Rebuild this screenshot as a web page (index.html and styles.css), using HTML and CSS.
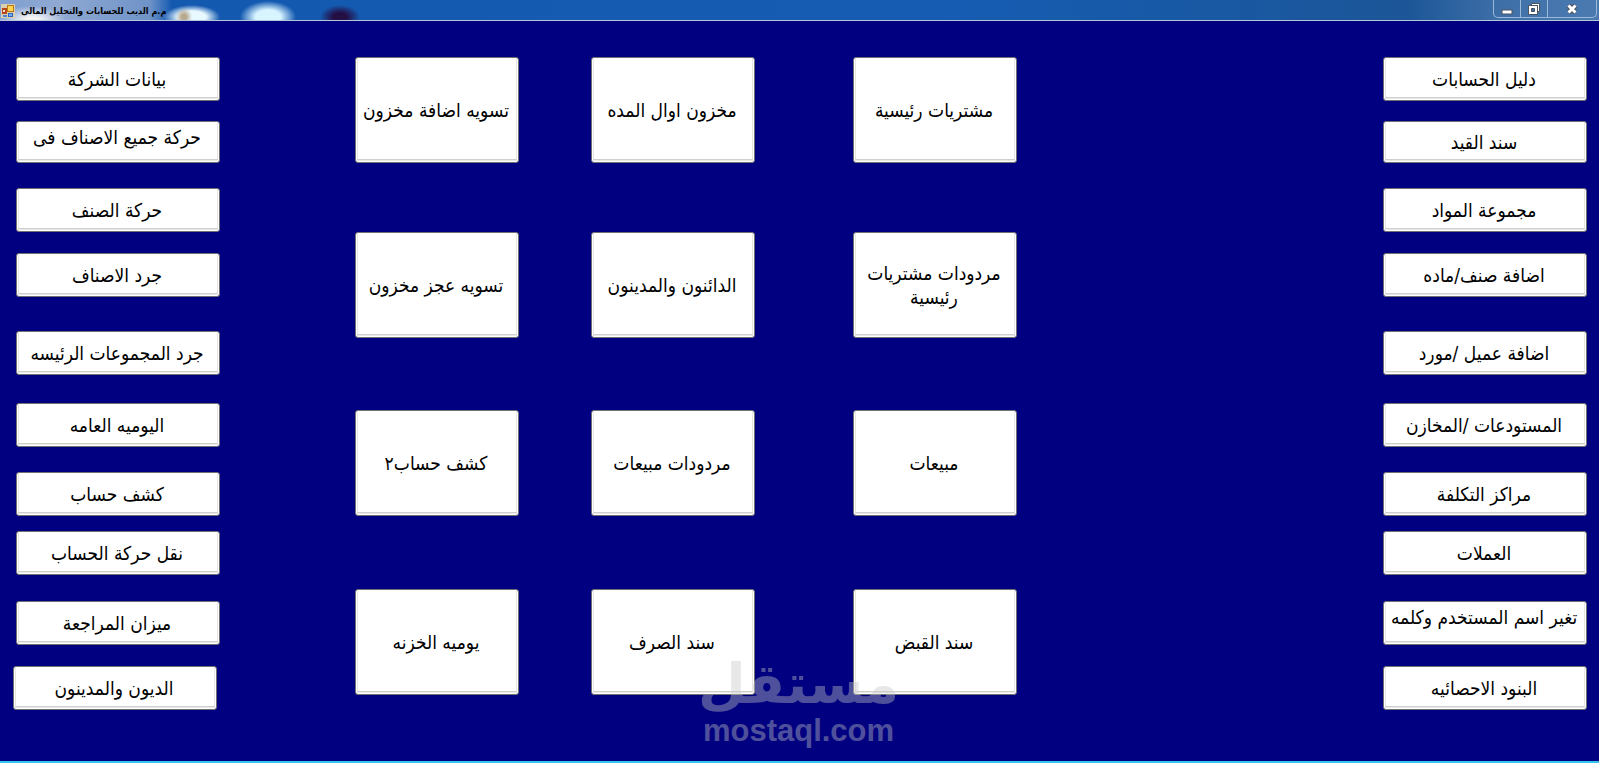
FILE: index.html
```html
<!DOCTYPE html>
<html lang="ar">
<head>
<meta charset="utf-8">
<meta name="viewport" content="width=device-width, initial-scale=1">
<title>م.م الديب للحسابات والتحليل المالى</title>
<link rel="stylesheet" href="styles.css">
</head>
<body>
<div class="window">
  <header class="titlebar">
    <svg class="app-icon" viewBox="0 0 14 14" aria-hidden="true">
      <rect x="0" y="0" width="14" height="14" fill="#d9cfae"/>
      <rect x="1" y="4" width="5" height="6" fill="#b5481c"/>
      <rect x="2" y="6" width="2" height="2" fill="#f3d9c0"/>
      <rect x="6" y="1" width="7" height="7" fill="#b87a10"/>
      <rect x="7" y="2" width="5" height="5" fill="#ffd257"/>
      <rect x="7" y="9" width="5" height="4" fill="#2f62c4"/>
      <rect x="8" y="10" width="3" height="2" fill="#6fb0f5"/>
      <rect x="2" y="11" width="4" height="2" fill="#4d84d6"/>
    </svg>
    <h1 class="title" dir="rtl">م.م الديب للحسابات والتحليل المالى</h1>
    <div class="controls">
      <button class="control minimize" type="button" aria-label="تصغير">
        <svg viewBox="0 0 12 12"><rect x="1" y="7" width="10" height="4" fill="#fff" stroke="#4b5260"/></svg>
      </button>
      <button class="control restore" type="button" aria-label="استعادة">
        <svg viewBox="0 0 12 12"><path d="M3.500.5h8v8h-2v-6h-6z" fill="#fff" stroke="#4b5260"/><path d="M.5 2.500h9v9h-9z" fill="#fff" stroke="#4b5260"/><path d="M3.500 5.500h3v3h-3z" fill="#3f6ba5" stroke="#4b5260"/></svg>
      </button>
      <button class="control close" type="button" aria-label="إغلاق">
        <svg viewBox="0 0 12 12"><path d="M2.500 2.500l7 7M9.500 2.500l-7 7" stroke="#4b5260" stroke-width="5"/><path d="M2.500 2.500l7 7M9.500 2.500l-7 7" stroke="#fff" stroke-width="3"/></svg>
      </button>
    </div>
  </header>

  <main class="desk">
    <nav class="side reports" aria-label="التقارير">
      <button type="button">بيانات الشركة</button>
      <button type="button" class="top">حركة جميع الاصناف فى</button>
      <button type="button">حركة الصنف</button>
      <button type="button">جرد الاصناف</button>
      <button type="button">جرد المجموعات الرئيسه</button>
      <button type="button">اليوميه العامه</button>
      <button type="button">كشف حساب</button>
      <button type="button">نقل حركة الحساب</button>
      <button type="button">ميزان المراجعة</button>
      <button type="button">الديون والمدينون</button>
    </nav>
    <section class="tiles stock">
      <button type="button">تسويه اضافة مخزون</button>
      <button type="button">تسويه عجز مخزون</button>
      <button type="button">كشف حساب٢</button>
      <button type="button">يوميه الخزنه</button>
    </section>
    <section class="tiles middle">
      <button type="button">مخزون اوال المده</button>
      <button type="button">الدائنون والمدينون</button>
      <button type="button">مردودات مبيعات</button>
      <button type="button">سند الصرف</button>
    </section>
    <section class="tiles trade">
      <button type="button">مشتريات رئيسية</button>
      <button type="button">مردودات مشتريات رئيسية</button>
      <button type="button">مبيعات</button>
      <button type="button">سند القبض</button>
    </section>
    <nav class="side setup" aria-label="الملفات">
      <button type="button">دليل الحسابات</button>
      <button type="button">سند القيد</button>
      <button type="button">مجموعة المواد</button>
      <button type="button">اضافة صنف/ماده</button>
      <button type="button">اضافة عميل /مورد</button>
      <button type="button">المستودعات /المخازن</button>
      <button type="button">مراكز التكلفة</button>
      <button type="button">العملات</button>
      <button type="button" class="top">تغير اسم المستخدم وكلمه</button>
      <button type="button">البنود الاحصائيه</button>
    </nav>
  </main>

  <div class="watermark">
    <span class="brand" dir="rtl">مستقل</span>
    <span class="domain">mostaql.com</span>
  </div>
</div>
</body>
</html>
```

FILE: styles.css
```css
* { box-sizing: border-box; }

body {
  margin: 0;
  background: #000080;
  font-family: "DejaVu Sans Condensed", "DejaVu Sans", sans-serif;
}

.window {
  position: relative;
  display: flex;
  flex-direction: column;
  min-height: 100vh;
  border-bottom: 2px solid #35c3ee;
}

.titlebar {
  display: flex;
  align-items: flex-start;
  height: 21px;
  padding-right: 2px;
  border-bottom: 1px solid #b4c8d8;
  background:
    radial-gradient(ellipse 8px 9px at 184px 17px, #b7a98f 30%, transparent),
    radial-gradient(ellipse 28px 12px at 192px 17px, #e8f8ff 50%, transparent),
    radial-gradient(ellipse 28px 16px at 268px 17px, #d8f4ff 45%, transparent),
    radial-gradient(ellipse 20px 12px at 340px 17px, #240f45 35%, transparent),
    radial-gradient(ellipse 34px 14px at 32px 20px, #f4f4f4 20%, transparent),
    linear-gradient(90deg, #7f9fd0 0, #8fa9d2 60px, #6f93c8 150px, #1459b0 172px, #155cb2 60%, #1c5698 88%, #3f70a8 94%, #4a7ab0);
}

.app-icon { width: 14px; height: 14px; margin: 4px 6px 0 1px; }

.title {
  margin: 0;
  font-size: 9px;
  line-height: 22px;
  font-weight: bold;
  white-space: nowrap;
  color: #000;
}

.controls {
  display: flex;
  height: 18px;
  margin-left: auto;
  border: 1px solid #9db9da;
  border-top: 0;
  border-radius: 0 0 5px 5px;
}

.control {
  display: flex;
  align-items: center;
  justify-content: center;
  width: 27px;
  padding: 0;
  border: 0;
  border-right: 1px solid #9db9da;
  background: transparent;
}
.close { width: 48px; border-right: 0; }
.control svg { width: 12px; height: 12px; }

.desk {
  display: grid;
  flex: 1;
  grid-template-columns: 204px 135fr 164px 72fr 164px 98fr 164px 366fr 204px;
  padding: 36px 12px 51px 16px;
}
.reports { grid-column: 1; }
.stock { grid-column: 3; }
.middle { grid-column: 5; }
.trade { grid-column: 7; }
.setup { grid-column: 9; }

.side,
.tiles {
  display: flex;
  flex-direction: column;
}

.side button,
.tiles button {
  display: flex;
  align-items: center;
  justify-content: center;
  direction: rtl;
  padding: 0 6px 0 4px;
  border: 1px solid #707070;
  border-radius: 3px;
  background: #fff;
  box-shadow: inset 0 0 0 1px #fff, inset 0 -2px 0 #e8e8e8, inset 0 -3px 0 #cfcfcf, inset 2px 0 0 #e6e6e6, inset -2px 0 0 #e6e6e6;
  color: #000;
  font-family: inherit;
  font-size: 19px;
  line-height: 24px;
  text-align: center;
}

.side button { height: 44px; white-space: nowrap; }
.side button.top { align-items: flex-start; padding-top: 3px; }
.side button:nth-child(2) { height: 42px; margin-top: 20px; }
.side button:nth-child(3) { margin-top: 25px; }
.side button:nth-child(4) { margin-top: 21px; }
.side button:nth-child(5) { margin-top: 34px; }
.side button:nth-child(6) { margin-top: 28px; }
.side button:nth-child(7) { margin-top: 25px; }
.side button:nth-child(8) { margin-top: 15px; }
.side button:nth-child(9) { margin-top: 26px; }
.side button:nth-child(10) { margin-top: 21px; }
.reports button:last-child { margin-left: -3px; margin-right: 3px; }

.tiles button { height: 106px; }
.tiles button:nth-child(2) { margin-top: 69px; }
.tiles button:nth-child(3) { margin-top: 72px; }
.tiles button:nth-child(4) { margin-top: 73px; }

.watermark {
  position: absolute;
  left: 50%;
  bottom: 12px;
  display: flex;
  flex-direction: column;
  align-items: center;
  width: 192px;
  margin-left: -97px;
  color: #c6c8c6;
  opacity: 0.4;
  pointer-events: none;
}
.brand {
  font-family: "DejaVu Sans", sans-serif;
  font-size: 55px;
  line-height: 58px;
  font-weight: bold;
}
.domain {
  font-family: "Liberation Sans", Arial, sans-serif;
  font-size: 31px;
  line-height: 36px;
  font-weight: bold;
}
```
